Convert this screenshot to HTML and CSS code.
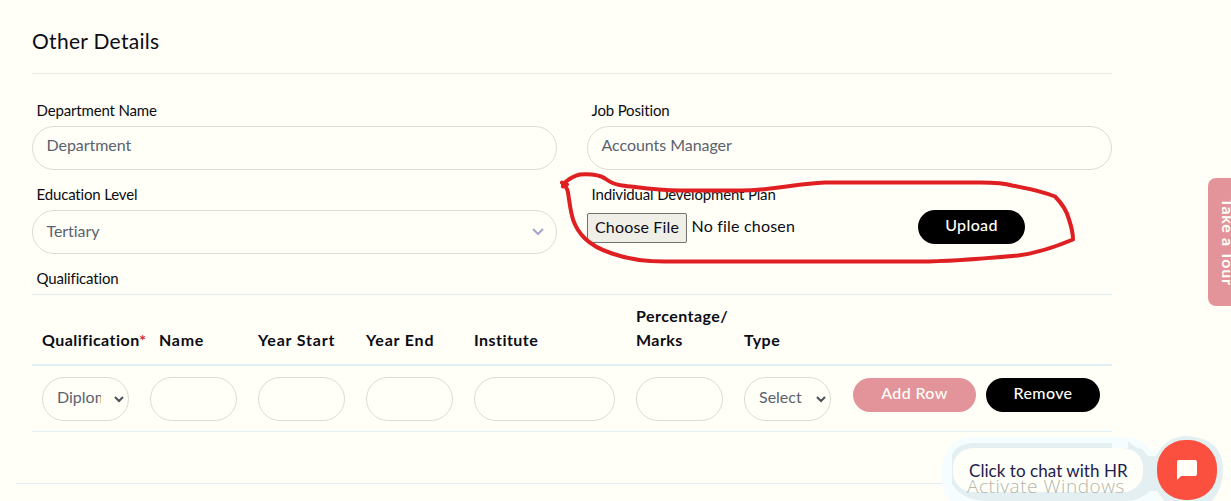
FILE: index.html
```html
<!DOCTYPE html>
<html lang="en">
<head>
<meta charset="utf-8">
<title>Other Details</title>
<link rel="stylesheet" href="styles.css">
</head>
<body>
<main class="page">
  <h1 class="title">Other Details</h1>
  <section class="fields">
    <div class="field"><label class="label">Department Name</label><div class="control">Department</div></div>
    <div class="field"><label class="label">Job Position</label><div class="control">Accounts Manager</div></div>
    <div class="field"><label class="label">Education Level</label>
      <div class="control select"><span>Tertiary</span><svg width="12" height="8" viewBox="0 0 12 8"><path d="M1 1l5 5 5-5" fill="none" stroke="#a6a5cb" stroke-width="2"/></svg></div></div>
    <div class="field"><label class="label">Individual Development Plan</label>
      <div class="upload-row"><button class="file">Choose File</button><span class="nofile">No file chosen</span><button class="btn upload">Upload</button></div></div>
  </section>
  <label class="label caption">Qualification</label>
  <section class="table">
    <div class="row head">
      <div>Qualification<span class="star">*</span></div><div class="name">Name</div><div class="year">Year Start</div><div class="year">Year End</div><div>Institute</div><div>Percentage/<br>Marks</div><div>Type</div><div></div>
    </div>
    <div class="row body">
      <div class="pill"><span class="clip">Diplom</span><svg width="10" height="7" viewBox="0 0 10 7"><path d="M1 1l4 4 4-4" fill="none" stroke="#495057" stroke-width="2"/></svg></div>
      <div class="pill"></div><div class="pill"></div><div class="pill"></div><div class="pill"></div><div class="pill"></div>
      <div class="pill"><span class="clip sel">Select</span><svg width="10" height="7" viewBox="0 0 10 7"><path d="M1 1l4 4 4-4" fill="none" stroke="#495057" stroke-width="2"/></svg></div>
      <div class="actions"><button class="btn add">Add Row</button><button class="btn remove">Remove</button></div>
    </div>
  </section>
</main>
<hr class="rule">
<aside class="tour"><span>Take a Tour</span></aside>
<svg class="halo" width="301" height="76" viewBox="930 425 301 76">
  <path d="M951 501C936 488 939 455 953 444Q960 437 977 437H1120Q1142 437 1150 449L1160 455V501Z" fill="#f6fdff"/>
  <path d="M985 501Q962 500 952 484V455Q957 443 975 443H1112V448H1128V441Q1136 449 1142 449L1148 456H1156Q1166 436 1187 436Q1223 438 1223 470Q1223 488 1212 501H1164L1157 491H1150Q1140 501 1125 501Z" fill="#e4eff1"/>
</svg>
<div class="chat">Click to chat with HR</div>
<div class="watermark">Activate Windows</div>
<div class="chat-btn"><svg width="20" height="20" viewBox="0 0 20 20"><path d="M2 0H18Q20 0 20 2V14Q20 16 18 16H4L0 20V2Q0 0 2 0Z" fill="#fffff7"/></svg></div>
<svg class="ink" width="520" height="100" viewBox="560 170 520 100"><path d="M562 182L567 184M563 186L566 181Q572 176 580 174Q598 173 605 178Q613 184 622 185C640 187 655 190 680 190H740C775 190 795 183 825 182H980Q1003 182 1012 185Q1040 190 1055 196Q1066 207 1069 219Q1073 231 1073 239Q1042 252 1018 255C985 258 945 261 920 261H665Q635 261 612 253Q594 247 585 238C571 224 571 211 568 192Q567 186 563 184" transform="translate(0 .5)" fill="none" stroke="#df1f22" stroke-width="4" stroke-linecap="round" stroke-linejoin="round"/></svg>
</body>
</html>
```
FILE: styles.css
```css
* { box-sizing: border-box; }
body { margin: 0; width: 1231px; height: 501px; overflow: hidden; position: relative; background: #fffff7; color: #0c0c14; font-family: Lato, "Open Sans", sans-serif; font-size: 16px; }
.page { padding: 0 0 0 32px; width: 1112px; }
.title { margin: 0; height: 74px; padding-top: 28px; border-bottom: 1px solid #ecece6; font-size: 21px; font-weight: 400; line-height: 26px; letter-spacing: .3px; }
.fields { display: grid; grid-template-columns: 525px 525px; column-gap: 30px; height: 194px; padding-top: 26px; }
.field { height: 84px; }
.label { display: block; height: 26px; padding-left: 4.5px; font-size: 15px; line-height: 20px; letter-spacing: -.16px; white-space: nowrap; }
.control { height: 44px; border: 1px solid #dcdcd5; border-radius: 22px; padding: 0 13.5px; font-size: 16px; line-height: 36px; letter-spacing: -.05px; color: #5a6270; }
.select { display: flex; align-items: center; justify-content: space-between; padding-right: 12px; }
.select span { margin-bottom: 2px; }
.upload-row { display: flex; align-items: flex-start; }
button { font-family: inherit; font-size: 16px; padding: 0; white-space: nowrap; }
.file { width: 100px; height: 30px; margin-top: 3px; padding-bottom: 4px; border: 1px solid #72726e; border-radius: 2px; background: #efefe8; color: #0c0c14; letter-spacing: .15px; }
.nofile { width: 231px; padding-left: 4.5px; line-height: 32px; letter-spacing: .2px; }
.btn { height: 34px; border: 0; border-radius: 17px; background: #000; color: #fffff7; padding-bottom: 5px; font-weight: 500; letter-spacing: .35px; }
.upload { width: 107px; }
.caption { height: 26px; }
.table { border-top: 1px solid #e1f0f4; height: 138px; border-bottom: 1px solid #e1f0f4; }
.row { display: grid; grid-template-columns: 87px 87px 87px 87px 141px 87px 87px 248px; column-gap: 21px; padding-left: 10px; }
.head { height: 71px; border-bottom: 2px solid #e1f0f4; align-items: end; padding-bottom: 12px; font-weight: 700; line-height: 24px; letter-spacing: .45px; white-space: nowrap; }
.name { padding-left: 9px; letter-spacing: .7px; }
.year { letter-spacing: .8px; }
.star { color: #c82a38; }
.body { padding-top: 11px; }
.pill { height: 44px; border: 1px solid #dcdcd5; border-radius: 22px; display: flex; align-items: center; justify-content: space-between; padding: 0 4px 0 14px; color: #5a6270; }
.clip { width: 44px; overflow: hidden; line-height: 24px; margin-bottom: 5px; white-space: nowrap; }
.sel { width: 48px; }
.actions { display: flex; gap: 10px; padding-top: 1px; margin-left: 1px; }
.add { width: 123px; flex: none; }
.btn.add { background: #e3949b; }
.remove { width: 114px; flex: none; }
.rule { margin: 51px 0 0 16px; width: 940px; border: 0; height: 1px; background: #e1f0f4; }
.tour { position: absolute; left: 1208px; top: 178px; width: 40px; height: 128px; border-radius: 8px; background: #e3949b; color: #fffff7; writing-mode: vertical-rl; font-size: 16px; font-weight: 700; line-height: 40px; letter-spacing: .7px; text-align: center; }
.halo { position: absolute; left: 930px; top: 425px; }
.chat { position: absolute; left: 953px; top: 448px; width: 190px; height: 44px; border-radius: 20px; background: #fffff9; color: #22204c; font-size: 17px; line-height: 46px; letter-spacing: .05px; padding-left: 16px; white-space: nowrap; }
.watermark { position: absolute; left: 967px; top: 473px; color: #b5b6ae; font-family: "Open Sans", sans-serif; font-weight: 300; font-size: 19px; line-height: 26px; letter-spacing: .55px; white-space: nowrap; }
.chat-btn { position: absolute; left: 1157px; top: 440px; width: 60px; height: 60px; border-radius: 28px; background: #fb503f; display: flex; align-items: center; justify-content: center; }
.ink { position: absolute; left: 560px; top: 170px; pointer-events: none; }
```
